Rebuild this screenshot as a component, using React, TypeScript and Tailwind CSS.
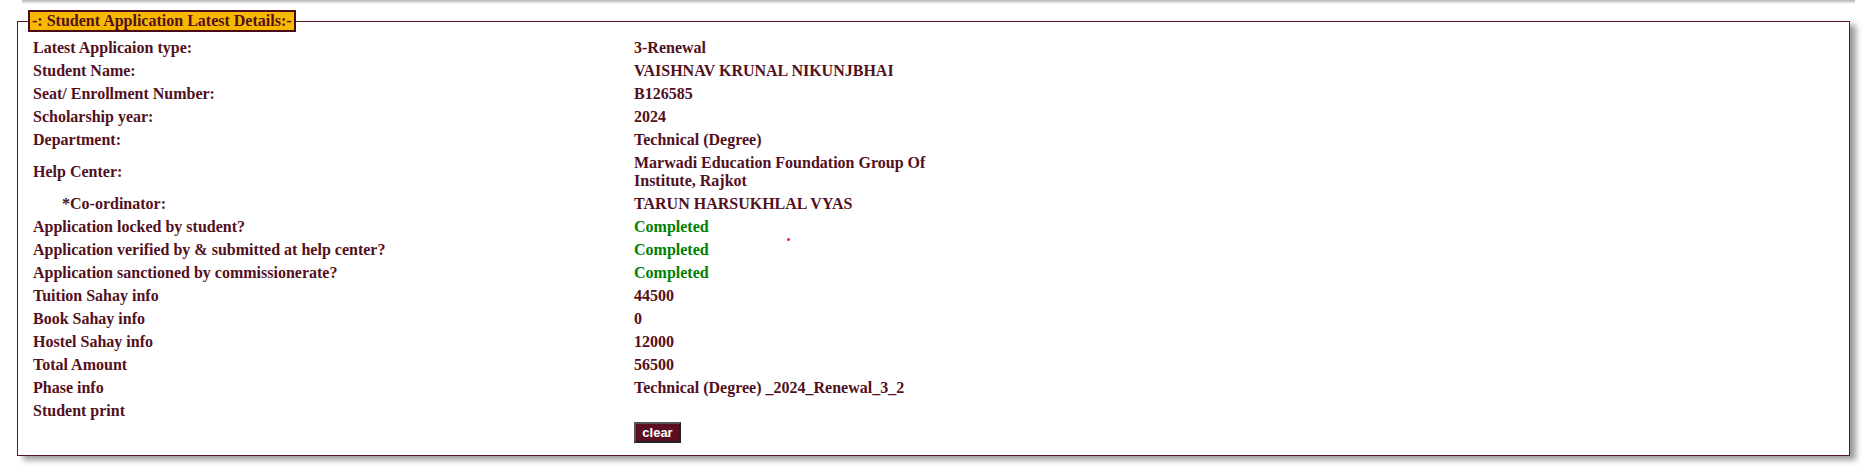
const rows: { label: string; value: string; green?: boolean; indent?: boolean }[] = [
  { label: "Latest Applicaion type:", value: "3-Renewal" },
  { label: "Student Name:", value: "VAISHNAV KRUNAL NIKUNJBHAI" },
  { label: "Seat/ Enrollment Number:", value: "B126585" },
  { label: "Scholarship year:", value: "2024" },
  { label: "Department:", value: "Technical (Degree)" },
  { label: "Help Center:", value: "Marwadi Education Foundation Group Of Institute, Rajkot" },
  { label: "*Co-ordinator:", value: "TARUN HARSUKHLAL VYAS", indent: true },
  { label: "Application locked by student?", value: "Completed", green: true },
  { label: "Application verified by & submitted at help center?", value: "Completed", green: true },
  { label: "Application sanctioned by commissionerate?", value: "Completed", green: true },
  { label: "Tuition Sahay info", value: "44500" },
  { label: "Book Sahay info", value: "0" },
  { label: "Hostel Sahay info", value: "12000" },
  { label: "Total Amount", value: "56500" },
  { label: "Phase info", value: "Technical (Degree) _2024_Renewal_3_2" },
  { label: "Student print", value: "" },
]

export default function App() {
  return (
    <div className="relative min-h-[474px] bg-white font-['Liberation_Serif',serif] text-[16px] font-bold text-[#521020]">
      {/* bottom edge of the box above */}
      <div className="ml-[22px] h-[4px] w-[1833px] bg-gradient-to-b from-[#b5b5b5] to-white" />
      <fieldset className="ml-[17px] mt-[6px] w-[1833px] border border-[#5a1624] pb-[11px] shadow-[6px_4px_6px_#9a9a9a]">
        <legend className="ml-[10px] border-2 border-[#4a0d18] bg-[#f7b900] px-[2px] leading-[18px] text-[#521020]">
          -: Student Application Latest Details:-
        </legend>
        <div className="grid grid-cols-[601px_330px] pl-[15px] pt-[4px]">
          {rows.map((r) => (
            <div key={r.label} className="contents">
              <div className={`flex items-center py-[2.5px] leading-[18px] ${r.indent ? "pl-[29px]" : ""}`}>
                {r.label}
              </div>
              <div className={`py-[2.5px] leading-[18px] ${r.green ? "text-[#008000]" : ""}`}>{r.value}</div>
            </div>
          ))}
          <div />
          <div className="-mt-[2px]">
            <button className="h-[21px] w-[47px] border-2 border-t-[#555] border-l-[#555] border-b-[#222] border-r-[#222] bg-[#5a1020] font-['Liberation_Sans',sans-serif] text-[13px] leading-[15px] font-bold text-white">
              clear
            </button>
          </div>
        </div>
      </fieldset>
      <span className="absolute left-[787px] top-[238px] h-[3px] w-[3px] rounded-full bg-[#e8252a]" />
    </div>
  )
}
